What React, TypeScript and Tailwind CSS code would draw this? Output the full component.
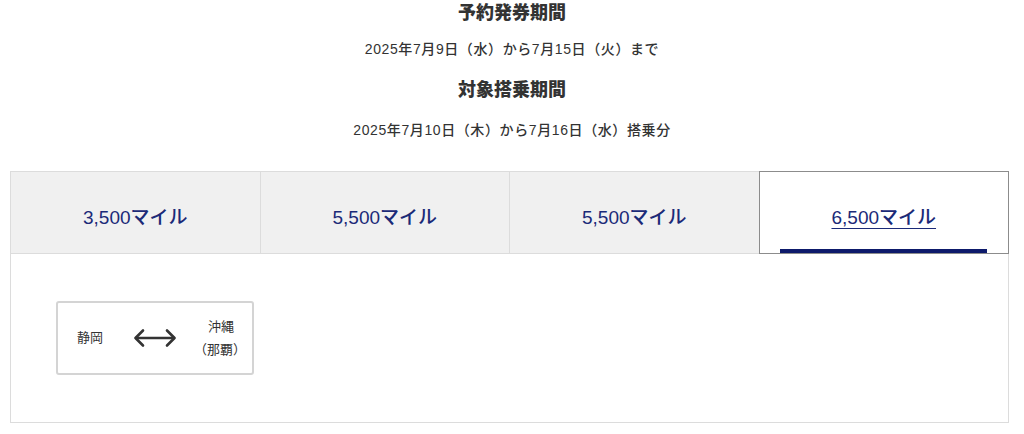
import React from "react";

const tabs = ["3,500マイル", "5,500マイル", "5,500マイル", "6,500マイル"];

export default function App() {
  return (
    <div
      className="w-[1024px] h-[434px] bg-white overflow-hidden text-[#333]"
      style={{ fontFamily: '"Liberation Sans", "Noto Sans CJK JP", sans-serif' }}
    >
      <div className="text-center pt-px">
        <h2 className="text-[18px] font-black leading-[22px] pt-px">予約発券期間</h2>
        <p className="mt-[14px] text-[14px] font-medium tracking-[0.6px] leading-[22px]">2025年7月9日（水）から7月15日（火）まで</p>
        <h2 className="mt-[19px] text-[18px] font-black leading-[22px]">対象搭乗期間</h2>
        <p className="mt-[18px] text-[14px] font-medium tracking-[0.6px] leading-[22px]">2025年7月10日（木）から7月16日（水）搭乗分</p>
      </div>

      <div className="mt-[30px] ml-[10px] w-[999px]">
        <div className="flex h-[83px]">
          {tabs.map((t, i) => {
            const active = i === 3;
            return (
              <div
                key={i}
                className={
                  active
                    ? "relative flex-1 flex items-center justify-center bg-white border border-[#8c8c8c]"
                    : "relative flex-1 flex items-center justify-center bg-[#f0f0f0] border-t border-b border-l border-[#dcdcdc]"
                }
              >
                <span
                  className={
                    active
                      ? "text-[19px] font-medium leading-[24px] text-[#1b2a78] underline underline-offset-[4px] decoration-1 mt-[10px]"
                      : "text-[19px] font-medium leading-[24px] text-[#1b2a78] mt-[10px]"
                  }
                >
                  {t}
                </span>
                {active && (
                  <div className="absolute left-[20px] right-[21px] bottom-0 h-[4px] bg-[#0d1a6b]" />
                )}
              </div>
            );
          })}
        </div>
        <div className="h-[169px] border-x border-b border-[#dcdcdc] pl-[45px] pt-[47px]">
          <div className="w-[198px] h-[74px] border-2 border-[#d4d4d4] rounded-[3px] flex items-center text-[13px] text-[#333]">
            <span className="ml-[19px] leading-[20px]">静岡</span>
            <svg
              className="ml-[30px]"
              width="44"
              height="20"
              viewBox="0 0 44 20"
              fill="none"
              stroke="#333"
              strokeWidth="2.6"
              strokeLinecap="round"
              strokeLinejoin="round"
            >
              <path d="M3 10 H41" />
              <path d="M10 2.5 L2.5 10 L10 17.5" />
              <path d="M34 2.5 L41.5 10 L34 17.5" />
            </svg>
            <div className="ml-[17px] flex flex-col items-center leading-[23px]">
              <span className="pl-[2px]">沖縄</span>
              <span>（那覇）</span>
            </div>
          </div>
        </div>
      </div>
    </div>
  );
}
